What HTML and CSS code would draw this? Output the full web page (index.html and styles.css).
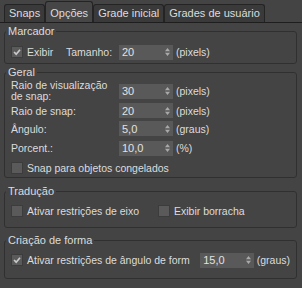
FILE: index.html
```html
<!DOCTYPE html>
<html lang="pt">
<head>
  <meta charset="UTF-8" />
  <title>Opções de Snap</title>
  <link rel="stylesheet" href="styles.css">
</head>
<body>

  <div class="tabs">
    <div class="tab">Snaps</div>
    <div class="tab active">Opções</div>
    <div class="tab">Grade inicial</div>
    <div class="tab">Grades de usuário</div>
  </div>

  <fieldset class="group marker">
    <legend>Marcador</legend>
    <div class="row marker-row">
      <label class="check"><span class="box checked"><svg viewBox="0 0 12 12"><polyline points="2.5,6 5,8.6 9.6,3.2"/></svg></span>Exibir</label>
      <span class="label">Tamanho:</span>
      <div class="spin"><span>20</span><svg class="arrows" viewBox="0 0 5 8"><path d="M0 3.2 2.5 0 5 3.2zM0 4.8h5L2.5 8z"/></svg></div>
      <span class="unit">(pixels)</span>
    </div>
  </fieldset>

  <fieldset class="group general">
    <legend>Geral</legend>
    <div class="grid">
      <span class="label tall">Raio de visualização de snap:</span>
      <div class="spin"><span>30</span><svg class="arrows" viewBox="0 0 5 8"><path d="M0 3.2 2.5 0 5 3.2zM0 4.8h5L2.5 8z"/></svg></div>
      <span class="unit">(pixels)</span>

      <span class="label">Raio de snap:</span>
      <div class="spin"><span>20</span><svg class="arrows" viewBox="0 0 5 8"><path d="M0 3.2 2.5 0 5 3.2zM0 4.8h5L2.5 8z"/></svg></div>
      <span class="unit">(pixels)</span>

      <span class="label">Ângulo:</span>
      <div class="spin"><span>5,0</span><svg class="arrows" viewBox="0 0 5 8"><path d="M0 3.2 2.5 0 5 3.2zM0 4.8h5L2.5 8z"/></svg></div>
      <span class="unit">(graus)</span>

      <span class="label">Porcent.:</span>
      <div class="spin"><span>10,0</span><svg class="arrows" viewBox="0 0 5 8"><path d="M0 3.2 2.5 0 5 3.2zM0 4.8h5L2.5 8z"/></svg></div>
      <span class="unit">(%)</span>

      <label class="check full"><span class="box"></span>Snap para objetos congelados</label>
    </div>
  </fieldset>

  <fieldset class="group translate">
    <legend>Tradução</legend>
    <div class="row">
      <label class="check first"><span class="box"></span>Ativar restrições de eixo</label>
      <label class="check"><span class="box"></span>Exibir borracha</label>
    </div>
  </fieldset>

  <fieldset class="group shape">
    <legend>Criação de forma</legend>
    <div class="row">
      <label class="check wide"><span class="box checked"><svg viewBox="0 0 12 12"><polyline points="2.5,6 5,8.6 9.6,3.2"/></svg></span>Ativar restrições de ângulo de form</label>
      <div class="spin"><span>15,0</span><svg class="arrows" viewBox="0 0 5 8"><path d="M0 3.2 2.5 0 5 3.2zM0 4.8h5L2.5 8z"/></svg></div>
      <span class="unit">(graus)</span>
    </div>
  </fieldset>

</body>
</html>
```

FILE: styles.css
```css
body {
  margin: 0;
  width: 302px;
  height: 288px;
  overflow: hidden;
  background: #444444;
  color: #dcdcdc;
  font-family: "Liberation Sans", Arial, sans-serif;
  font-size: 10.5px;
}

/* tab strip */
.tabs {
  display: flex;
  align-items: flex-end;
  height: 22px;
  padding-left: 4px;
  border-bottom: 1px solid #1e1e1e;
}

.tab {
  box-sizing: border-box;
  height: 18px;
  line-height: 16px;
  padding: 0 4px;
  border: 1px solid #242424;
  border-bottom: none;
  border-radius: 3px 3px 0 0;
  background: #3a3a3a;
  white-space: nowrap;
  font-size: 11px;
}

.tab.active {
  height: 21px;
  padding-top: 3px;
  background: #464646;
}

/* group boxes */
.group {
  margin: 1px 5px 0 4px;
  padding: 0 6px;
  border: 1px solid #303030;
  border-radius: 3px;
  min-width: 0;
}

.group legend {
  margin-left: -5px;
  padding: 0 2px;
  line-height: 14px;
  font-size: 11px;
}

.marker {
  padding-top: 6px;
  padding-bottom: 3px;
}

.general {
  padding-top: 1px;
}

.translate {
  margin-top: 6px;
  padding-top: 5px;
  padding-bottom: 8px;
}

.shape {
  margin-top: 5px;
  padding-top: 5px;
  padding-bottom: 10px;
}

.row {
  display: flex;
  align-items: center;
  height: 16px;
}

.marker-row .check {
  width: 55px;
}

.marker-row .label {
  width: 53px;
}

.grid {
  display: grid;
  grid-template-columns: 108px 54px auto;
  grid-template-rows: 22px 17px 19px 20px 19px;
  align-items: center;
}

.label.tall {
  line-height: 11px;
}

.unit {
  margin-left: 3px;
  white-space: nowrap;
}

/* spinner field */
.spin {
  box-sizing: border-box;
  display: flex;
  align-items: center;
  justify-content: space-between;
  width: 54px;
  height: 15px;
  padding: 0 3px;
  background: #595959;
  color: #e2e2e2;
  font-size: 11px;
}

.spin .arrows {
  width: 5px;
  height: 8px;
  fill: #a9a9a9;
}

/* checkboxes */
.check {
  display: flex;
  align-items: center;
  gap: 4px;
  white-space: nowrap;
}

.check.full {
  grid-column: 1 / -1;
}

.check.first {
  width: 147px;
}

.check.wide {
  width: 191px;
  overflow: hidden;
}

.box {
  box-sizing: border-box;
  width: 12px;
  height: 12px;
  flex: none;
  background: #5a5a5a;
  border: 1px solid #3c3c3c;
}

.box svg {
  display: block;
  width: 10px;
  height: 10px;
  fill: none;
  stroke: #c9c9c9;
  stroke-width: 2;
}
```
